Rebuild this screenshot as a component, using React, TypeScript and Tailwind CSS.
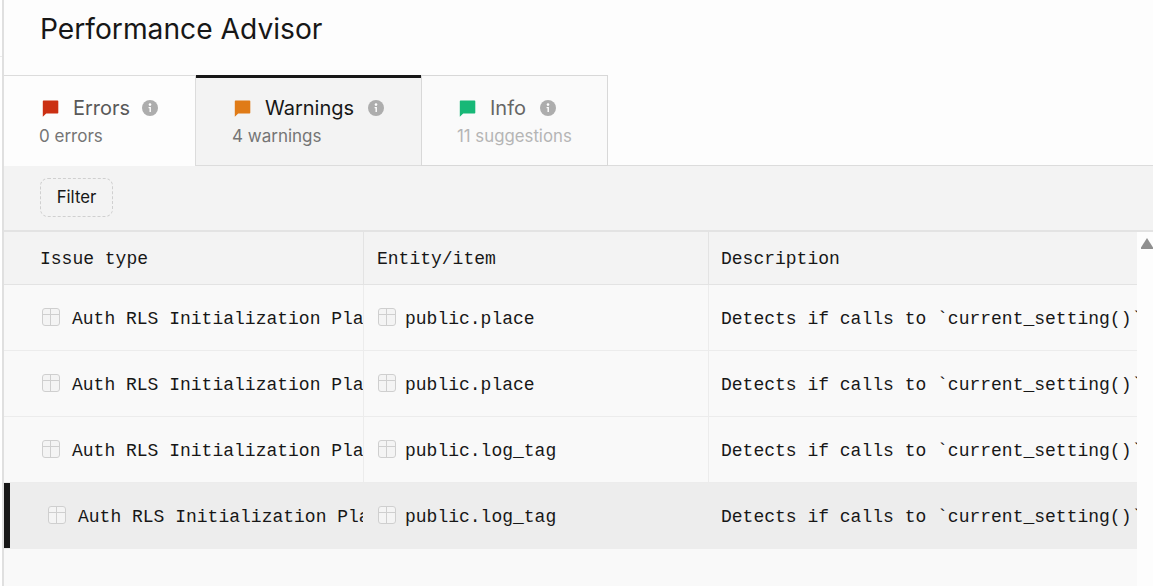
const sans = 'font-["Inter","Noto_Sans",sans-serif]';
const mono = 'font-["Liberation_Mono",monospace]';

const tabs = [
  { label: 'Errors', sub: '0 errors', fill: '#cb3013', state: 'plain' },
  { label: 'Warnings', sub: '4 warnings', fill: '#e07b17', state: 'active' },
  { label: 'Info', sub: '11 suggestions', fill: '#17b877', state: 'muted' },
];

const rows = [
  { entity: 'public.place' },
  { entity: 'public.place' },
  { entity: 'public.log_tag' },
  { entity: 'public.log_tag', selected: true },
];

const Bubble = ({ fill }: { fill: string }) => (
  <svg width="18" height="18" viewBox="0 0 18 18" className="shrink-0">
    <path d="M2.5 1.5h14a.8.8 0 0 1 .8.8v11.4a.8.8 0 0 1-.8.8H5.2l-3.4 3.2V2.2a.8.8 0 0 1 .7-.7z" fill={fill} />
  </svg>
);

const InfoDot = () => (
  <svg width="16" height="16" viewBox="0 0 16 16" className="shrink-0">
    <circle cx="8" cy="8" r="8" fill="#adadad" />
    <circle cx="8" cy="4.6" r="1.3" fill="#fff" />
    <path d="M6.6 7h2.3v5H7.5V8.2h-.9z" fill="#fff" />
  </svg>
);

const TableIcon = () => (
  <svg width="18" height="18" viewBox="0 0 18 18" fill="#f4f4f4" stroke="#cfcfcf" className="shrink-0 -mt-[2px]">
    <rect x="0.5" y="0.5" width="17" height="17" rx="2.5" />
    <path d="M0.5 6.5h17M8.5 0.5v17" />
  </svg>
);

const Tab = ({ label, sub, fill, state }: { label: string; sub: string; fill: string; state: string }) => {
  if (state === 'active') {
    return (
      <div className="w-[226px] h-[90px] bg-[#f3f3f3] border-t-[3px] border-[#171717] pl-[36px] pt-[18px] -mr-px">
        <div className="flex items-center h-[24px]">
          <span className="ml-[1px] mr-[14px] flex"><Bubble fill={fill} /></span>
          <span className="text-[20px] leading-[24px] text-[#171717]">{label}</span>
          <span className="ml-[14px] flex"><InfoDot /></span>
        </div>
        <div className="text-[17px] leading-[24px] mt-[4px] text-[#757575]">{sub}</div>
      </div>
    );
  }
  if (state === 'muted') {
    return (
      <div className="w-[187px] h-[91px] bg-[#fafafa] border border-[#d8d8d8] pl-[35px] pt-[20px]">
        <div className="flex items-center h-[24px]">
          <span className="ml-[1px] mr-[14px] flex"><Bubble fill={fill} /></span>
          <span className="text-[20px] leading-[24px] text-[#666666]">{label}</span>
          <span className="ml-[14px] flex"><InfoDot /></span>
        </div>
        <div className="text-[16.8px] leading-[24px] mt-[4px] text-[#b5b5b5]">{sub}</div>
      </div>
    );
  }
  return (
    <div className="w-[192px] h-[91px] bg-[#fdfdfd] border-t border-r border-[#dcdcdc] pl-[36px] pt-[20px]">
      <div className="flex items-center h-[24px]">
        <span className="ml-[1px] mr-[14px] flex"><Bubble fill={fill} /></span>
        <span className="text-[20px] leading-[24px] text-[#595959]">{label}</span>
        <span className="ml-[12px] flex"><InfoDot /></span>
      </div>
      <div className="text-[17px] leading-[24px] mt-[4px] -ml-[1px] text-[#757575]">{sub}</div>
    </div>
  );
};

const Row = ({ entity, selected }: { entity: string; selected?: boolean }) => {
  const cellBorder = selected ? 'border-transparent' : 'border-[#ececec]';
  return (
    <div className={`flex h-[66px] border-b ${selected ? 'bg-[#ededed] border-transparent' : 'bg-[#f9f9f9] border-[#ececec]'}`}>
      <div className={`w-[360px] shrink-0 flex items-center overflow-hidden border-r ${cellBorder} ${selected ? 'border-l-[6px] border-l-[#171717] pl-[38px]' : 'pl-[38px]'}`}>
        <TableIcon />
        <span className="ml-[12px] pt-[4px] whitespace-nowrap text-[18px] text-[#171717]">Auth RLS Initialization Plan</span>
      </div>
      <div className={`w-[345px] shrink-0 flex items-center pl-[14px] border-r ${cellBorder}`}>
        <TableIcon />
        <span className="ml-[9px] pt-[4px] text-[18px] text-[#171717]">{entity}</span>
      </div>
      <div className="flex-1 min-w-0 flex items-center pl-[12px] overflow-hidden">
        <span className="pt-[4px] whitespace-nowrap text-[18px] text-[#171717]">Detects if calls to `current_setting()` are re-evaluated</span>
      </div>
    </div>
  );
};

export default function App() {
  return (
    <div className={`w-[1153px] h-[586px] overflow-hidden bg-[#fdfdfd] flex ${sans}`}>
      <div className="w-[4px] shrink-0 border-r-2 border-[#e0e0e0] bg-white">
        <div className="h-[57px] border-b border-[#ececec]" />
      </div>
      <div className="flex-1 min-w-0 flex flex-col">
        <div className="h-[75px] shrink-0 pl-[36px] pt-[11px] text-[28.2px] leading-[36px] text-[#171717]">Performance Advisor</div>

        <div className="h-[91px] shrink-0 flex border-b border-[#dcdcdc]">
          {tabs.map((t) => (
            <Tab key={t.label} {...t} />
          ))}
        </div>

        <div className="h-[64px] shrink-0 bg-[#f3f3f3] pl-[36px] pt-[12px]">
          <button className="w-[73px] h-[39px] rounded-[8px] border border-dashed border-[#d0d0d0] text-[16.8px] text-[#171717]">Filter</button>
        </div>

        <div className="flex-1 min-h-0 flex border-t-2 border-[#e3e3e3]">
          <div className={`w-[1133px] shrink-0 bg-[#f9f9f9] ${mono}`}>
            <div className="flex h-[53px] bg-[#f3f3f3] border-b border-[#e3e3e3] text-[18px] text-[#171717]">
              <div className="w-[360px] shrink-0 pl-[36px] pt-[3px] flex items-center border-r border-[#e3e3e3]">Issue type</div>
              <div className="w-[345px] shrink-0 pl-[13px] pt-[3px] flex items-center border-r border-[#e3e3e3]">Entity/item</div>
              <div className="flex-1 pl-[12px] pt-[3px] flex items-center">Description</div>
            </div>
            {rows.map((r, i) => (
              <Row key={i} {...r} />
            ))}
          </div>
          <div className="flex-1 bg-[#fdfdfd] pt-[6px] pl-[4px]">
            <svg width="12" height="11" viewBox="0 0 12 11">
              <path d="M6 0L12 9.5a1 1 0 0 1-.8 1.5H.8A1 1 0 0 1 0 9.5z" fill="#8f8f8f" />
            </svg>
          </div>
        </div>
      </div>
    </div>
  );
}
